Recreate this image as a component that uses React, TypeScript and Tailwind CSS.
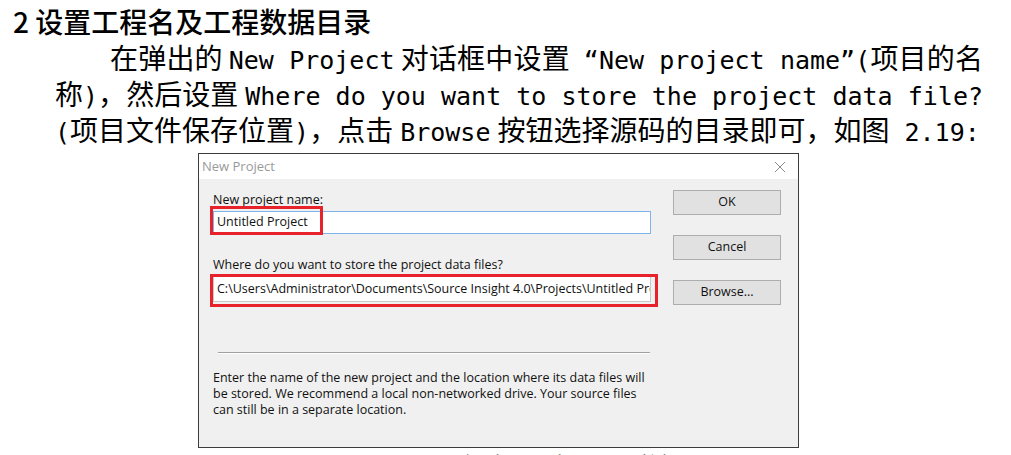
import React from "react";

const cjk = "font-['Noto_Sans_CJK_SC','Noto_Sans',sans-serif]";
const mono = "font-['DejaVu_Sans_Mono',monospace] text-[25px] leading-none";
const ui = "font-['Open_Sans','Noto_Sans',sans-serif]";

function M({ children, cls = "" }: { children: React.ReactNode; cls?: string }) {
  return <span className={`${mono} ${cls}`}>{children}</span>;
}

function Btn({ label }: { label: string }) {
  return (
    <div className="w-[108px] h-[25px] border border-[#adadad] bg-[#e1e1e1] flex items-center justify-center text-[12.5px] text-[#111]">
      {label}
    </div>
  );
}

export default function App() {
  return (
    <div className={`relative w-[1011px] h-[455px] overflow-hidden bg-white text-black ${cjk}`}>
      <div className="pl-[13px] pt-[6px] h-[39px] text-[28px] leading-[30px] font-medium whitespace-nowrap">
        2 设置工程名及工程数据目录
      </div>
      <div className="pl-[55px] w-[983px] text-[28px] leading-[36px] whitespace-nowrap">
        <div className="h-[36px] pl-[55px] text-justify [text-align-last:justify]">
          在弹出的<M cls="mx-[6px]">New Project</M>对话框中设置<M cls="ml-[14px]">“New project name”(</M>项目的名
        </div>
        <div className="h-[36px] text-justify [text-align-last:justify]">
          称<M>)</M>，然后设置<M cls="ml-[7px]">Where do you want to store the project data file?</M>
        </div>
        <div className="h-[36px]">
          <M>(</M>项目文件保存位置<M>)</M>，点击<M cls="mx-[7px]">Browse</M>按钮选择源码的目录即可，如图<M cls="ml-[15px]">2.19:</M>
        </div>
      </div>

      <div className={`relative ml-[198px] mt-[6px] w-[601px] h-[295px] border border-[#3c3c3c] bg-[#f0f0f0] flex flex-col ${ui}`}>
        <div className="h-[25px] bg-white flex items-center justify-between pl-[3px] pr-[12px] shrink-0">
          <span className="text-[13px] text-[#9a9a9a]">New Project</span>
          <svg width="12" height="12" viewBox="0 0 12 12" className="text-[#8a8a8a]">
            <path d="M1 1 L11 11 M11 1 L1 11" stroke="currentColor" strokeWidth="1" fill="none" />
          </svg>
        </div>
        <div className="flex flex-1">
          <div className="w-[452px] pl-[14px] pt-[10px] flex flex-col text-[12.5px] text-[#111]">
            <div className="h-[22px] leading-[22px]">New project name:</div>
            <div className="w-[438px] h-[23px] bg-white border border-[#7eb4ea] flex items-center pl-[3px] whitespace-nowrap overflow-hidden">
              Untitled Project
            </div>
            <div className="h-[20px]" />
            <div className="h-[22px] leading-[22px]">Where do you want to store the project data files?</div>
            <div className="w-[438px] h-[26px] bg-white border border-[#c8c8c8] flex items-center pl-[3px] whitespace-nowrap overflow-hidden">
              C:\Users\Administrator\Documents\Source Insight 4.0\Projects\Untitled Project
            </div>
            <div className="ml-[5px] mt-[50px] w-[432px] h-[2px] border-t border-[#a0a0a0] border-b border-b-white" />
            <div className="mt-[16px] leading-[16px] w-[440px]">
              <div className="whitespace-nowrap">Enter the name of the new project and the location where its data files will</div>
              <div className="whitespace-nowrap">be stored. We recommend a local non-networked drive. Your source files</div>
              <div className="whitespace-nowrap">can still be in a separate location.</div>
            </div>
          </div>
          <div className="pl-[22px] pt-[11px] flex flex-col gap-[20px]">
            <Btn label="OK" />
            <Btn label="Cancel" />
            <Btn label="Browse..." />
          </div>
        </div>
        <div className="absolute left-[11px] top-[52px] w-[113px] h-[29px] border-[3px] border-[#e8222a]" />
        <div className="absolute left-[11px] top-[120px] w-[448px] h-[33px] border-[3px] border-[#e8222a]" />
      </div>

      <div className="pl-[370px] mt-[0px] text-[22px] leading-[30px] whitespace-nowrap">
        图 <M cls="text-[20px]">2.19</M> 新建工程名及工程数据目录
      </div>
    </div>
  );
}
